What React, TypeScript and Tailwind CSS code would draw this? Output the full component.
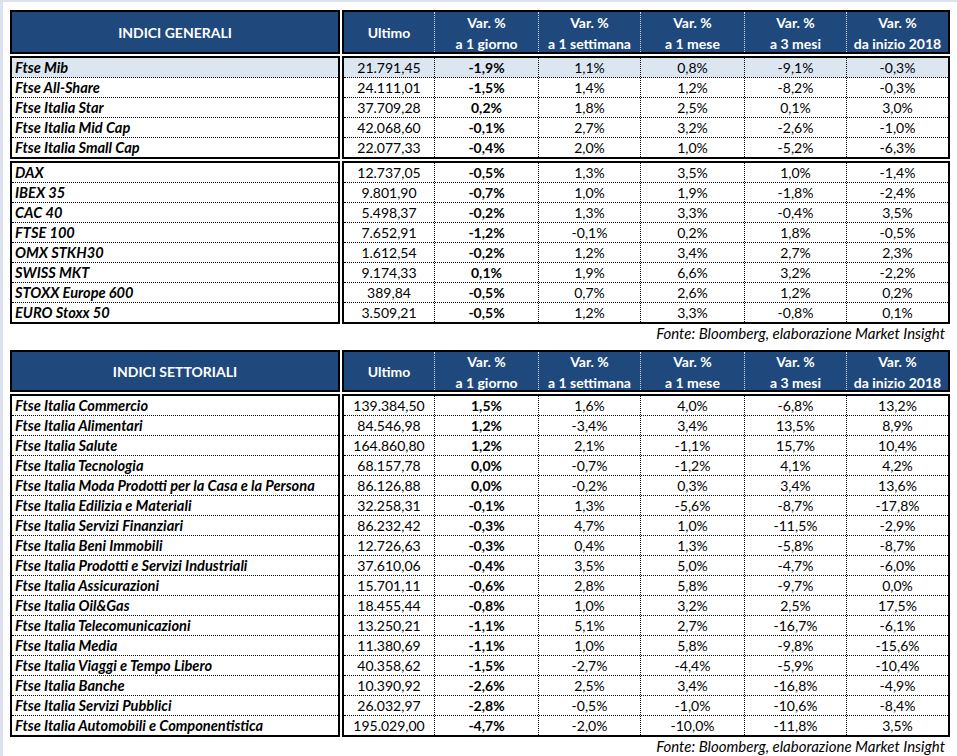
import React from "react";

// ── Data ──────────────────────────────────────────────────────────────────────

type Row = [string, string, string, string, string, string, string];

const italia: Row[] = [
  ["Ftse Mib", "21.791,45", "-1,9%", "1,1%", "0,8%", "-9,1%", "-0,3%"],
  ["Ftse All-Share", "24.111,01", "-1,5%", "1,4%", "1,2%", "-8,2%", "-0,3%"],
  ["Ftse Italia Star", "37.709,28", "0,2%", "1,8%", "2,5%", "0,1%", "3,0%"],
  ["Ftse Italia Mid Cap", "42.068,60", "-0,1%", "2,7%", "3,2%", "-2,6%", "-1,0%"],
  ["Ftse Italia Small Cap", "22.077,33", "-0,4%", "2,0%", "1,0%", "-5,2%", "-6,3%"],
];

const esteri: Row[] = [
  ["DAX", "12.737,05", "-0,5%", "1,3%", "3,5%", "1,0%", "-1,4%"],
  ["IBEX 35", "9.801,90", "-0,7%", "1,0%", "1,9%", "-1,8%", "-2,4%"],
  ["CAC 40", "5.498,37", "-0,2%", "1,3%", "3,3%", "-0,4%", "3,5%"],
  ["FTSE 100", "7.652,91", "-1,2%", "-0,1%", "0,2%", "1,8%", "-0,5%"],
  ["OMX STKH30", "1.612,54", "-0,2%", "1,2%", "3,4%", "2,7%", "2,3%"],
  ["SWISS MKT", "9.174,33", "0,1%", "1,9%", "6,6%", "3,2%", "-2,2%"],
  ["STOXX Europe 600", "389,84", "-0,5%", "0,7%", "2,6%", "1,2%", "0,2%"],
  ["EURO Stoxx 50", "3.509,21", "-0,5%", "1,2%", "3,3%", "-0,8%", "0,1%"],
];

const settoriali: Row[] = [
  ["Ftse Italia Commercio", "139.384,50", "1,5%", "1,6%", "4,0%", "-6,8%", "13,2%"],
  ["Ftse Italia Alimentari", "84.546,98", "1,2%", "-3,4%", "3,4%", "13,5%", "8,9%"],
  ["Ftse Italia Salute", "164.860,80", "1,2%", "2,1%", "-1,1%", "15,7%", "10,4%"],
  ["Ftse Italia Tecnologia", "68.157,78", "0,0%", "-0,7%", "-1,2%", "4,1%", "4,2%"],
  ["Ftse Italia Moda Prodotti per la Casa e la Persona", "86.126,88", "0,0%", "-0,2%", "0,3%", "3,4%", "13,6%"],
  ["Ftse Italia Edilizia e Materiali", "32.258,31", "-0,1%", "1,3%", "-5,6%", "-8,7%", "-17,8%"],
  ["Ftse Italia Servizi Finanziari", "86.232,42", "-0,3%", "4,7%", "1,0%", "-11,5%", "-2,9%"],
  ["Ftse Italia Beni Immobili", "12.726,63", "-0,3%", "0,4%", "1,3%", "-5,8%", "-8,7%"],
  ["Ftse Italia Prodotti e Servizi Industriali", "37.610,06", "-0,4%", "3,5%", "5,0%", "-4,7%", "-6,0%"],
  ["Ftse Italia Assicurazioni", "15.701,11", "-0,6%", "2,8%", "5,8%", "-9,7%", "0,0%"],
  ["Ftse Italia Oil&Gas", "18.455,44", "-0,8%", "1,0%", "3,2%", "2,5%", "17,5%"],
  ["Ftse Italia Telecomunicazioni", "13.250,21", "-1,1%", "5,1%", "2,7%", "-16,7%", "-6,1%"],
  ["Ftse Italia Media", "11.380,69", "-1,1%", "1,0%", "5,8%", "-9,8%", "-15,6%"],
  ["Ftse Italia Viaggi e Tempo Libero", "40.358,62", "-1,5%", "-2,7%", "-4,4%", "-5,9%", "-10,4%"],
  ["Ftse Italia Banche", "10.390,92", "-2,6%", "2,5%", "3,4%", "-16,8%", "-4,9%"],
  ["Ftse Italia Servizi Pubblici", "26.032,97", "-2,8%", "-0,5%", "-1,0%", "-10,6%", "-8,4%"],
  ["Ftse Italia Automobili e Componentistica", "195.029,00", "-4,7%", "-2,0%", "-10,0%", "-11,8%", "3,5%"],
];

// column widths incl. the dotted right border
const colW = ["w-[91px]", "w-[104px]", "w-[102px]", "w-[104px]", "w-[102px]", "w-[101px]"];

const heads: [string, string][] = [
  ["Var. %", "a 1 giorno"],
  ["Var. %", "a 1 settimana"],
  ["Var. %", "a 1 mese"],
  ["Var. %", "a 3 mesi"],
  ["Var. %", "da inizio 2018"],
];

// ── Pieces ────────────────────────────────────────────────────────────────────

function Header({ title, tall }: { title: string; tall?: boolean }) {
  const h = tall ? "h-[44px]" : "h-[42px]";
  return (
    <div className={`flex gap-[2px] ${h}`}>
      <div className="w-[330px] border-2 border-black bg-[#1f497d] flex items-center justify-center text-white font-bold">
        {title}
      </div>
      <div className="w-[608px] border-2 border-black bg-[#1f497d] flex text-white font-bold">
        <div className={`${colW[0]} border-r border-dotted border-white/80 flex items-center justify-center`}>
          Ultimo
        </div>
        {heads.map(([a, b], i) => (
          <div
            key={i}
            className={`${colW[i + 1]} ${i < 4 ? "border-r border-dotted border-white/80" : ""} flex flex-col items-center justify-center leading-[21px] pt-[1px]`}
          >
            <span>{a}</span>
            <span>{b}</span>
          </div>
        ))}
      </div>
    </div>
  );
}

function Block({ rows, highlight }: { rows: Row[]; highlight?: number }) {
  const rowCls = (i: number) =>
    i < rows.length - 1 ? "h-[20px] border-b border-dotted border-black" : "h-[19px]";
  return (
    <div className="flex gap-[2px]">
      <div className="w-[330px] border-2 border-black">
        {rows.map((r, i) => (
          <div
            key={i}
            className={`${rowCls(i)} flex items-center pl-[3px] text-[14.6px] font-bold italic whitespace-nowrap ${
              i === highlight ? "bg-[#dce6f1]" : ""
            }`}
          >
            {r[0]}
          </div>
        ))}
      </div>
      <div className="w-[608px] border-2 border-black">
        {rows.map((r, i) => (
          <div key={i} className={`${rowCls(i)} flex ${i === highlight ? "bg-[#dce6f1]" : ""}`}>
            {r.slice(1).map((v, j) => (
              <div
                key={j}
                className={`${colW[j]} flex items-center justify-center ${j < 5 ? "border-r border-dotted border-black" : ""} ${
                  j === 1 ? "font-bold" : ""
                }`}
              >
                {v}
              </div>
            ))}
          </div>
        ))}
      </div>
    </div>
  );
}

function Fonte() {
  return (
    <div className="text-right italic text-[15px] pr-[12px] h-[26px] leading-[18px]">
      Fonte: Bloomberg, elaborazione Market Insight
    </div>
  );
}

// ── Page ──────────────────────────────────────────────────────────────────────

export default function App() {
  return (
    <div
      className="w-[957px] h-[756px] overflow-hidden bg-white border-t-2 border-l-[3px] border-[#dbe2ee] text-black text-[14px]"
      style={{ fontFamily: "Lato, 'Liberation Sans', sans-serif" }}
    >
      <div className="pl-[7px] pt-[8px] flex flex-col">
        <div className="flex flex-col gap-[2px]">
          <Header title="INDICI GENERALI" tall />
          <Block rows={italia} highlight={0} />
          <Block rows={esteri} />
        </div>
        <Fonte />
        <div className="flex flex-col gap-[2px]">
          <Header title="INDICI SETTORIALI" />
          <Block rows={settoriali} />
        </div>
        <Fonte />
      </div>
    </div>
  );
}
